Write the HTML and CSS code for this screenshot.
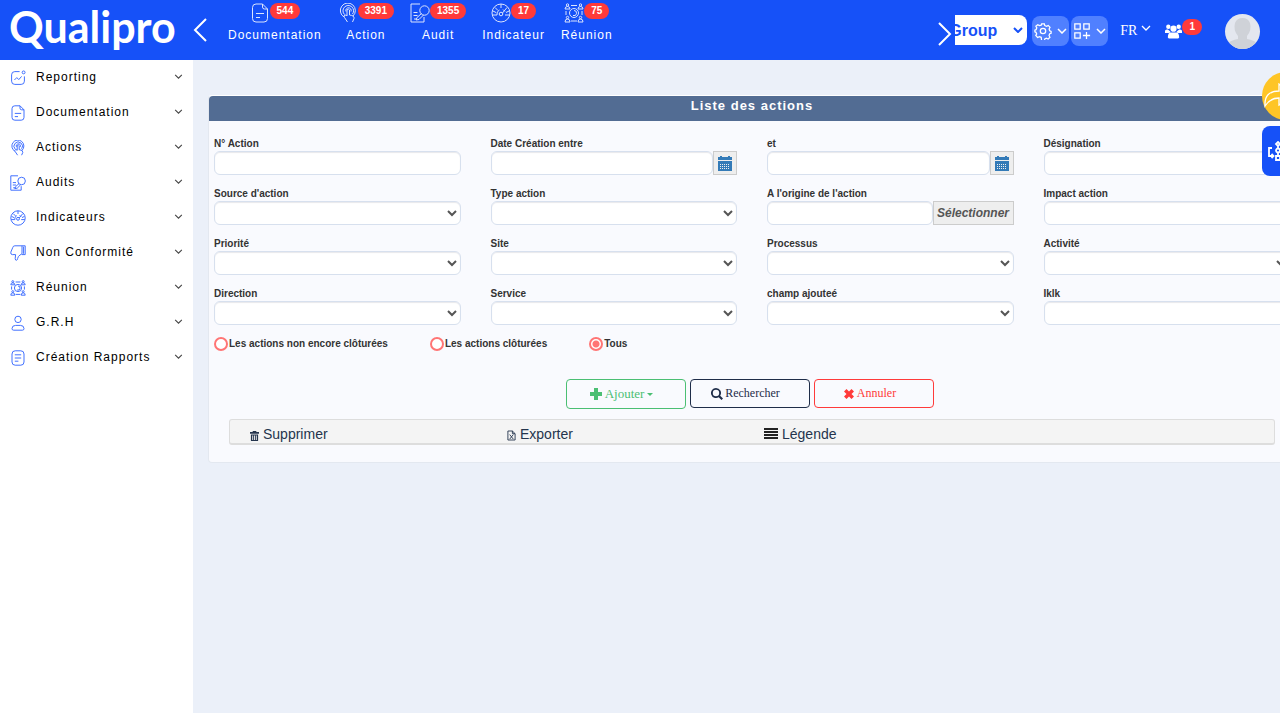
FILE: index.html
```html
<!DOCTYPE html>
<html lang="fr">
<head>
<meta charset="utf-8">
<title>Qualipro - Liste des actions</title>
<link rel="stylesheet" href="styles.css">
</head>
<body>
<svg class="sprite" aria-hidden="true">
  <symbol id="i-report" viewBox="0 0 20 20"><path d="M12 2H6Q2 2 2 6v8q0 4 4 4h8q4 0 4-4V8M5.500 12.500l3-3 2.500 2.500 3.500-4"/><circle cx="17" cy="3" r="1.800"/></symbol>
  <symbol id="i-doc" viewBox="0 0 20 20"><path d="M12.500 1H6Q2.500 1 2.500 4.500v11Q2.500 19 6 19h8q3.500 0 3.500-3.500V6zM12.500 1v3q0 2 2 2h3M6 10.500h8M6 14.500h4"/></symbol>
  <symbol id="i-touch" viewBox="0 0 20 20"><path d="M6 14A7.500 7.500 0 1 1 15 13M6.500 11.500a5.300 5.300 0 1 1 8-.5M8 8.500a2.700 2.700 0 1 1 5 0M9 13V7q1.300-2 2.500 0v5q5 .5 4.500 3.500L14.500 19M9 12.500 7 12q-2 .5-.5 2.500L9.500 19"/></symbol>
  <symbol id="i-audit" viewBox="0 0 20 20"><path d="M10 1H1v18h13v-5M3.500 9.500h4M3.500 12.500h4M4 16h3M11.500 10.500 7 14.500l-1 2.500 3-.5 4.500-4.500"/><circle cx="14.500" cy="7.500" r="4.700"/></symbol>
  <symbol id="i-gauge" viewBox="0 0 20 20"><circle cx="10" cy="10" r="9"/><path d="M1.500 12H6m8 0h4.500M4 4.500l3 3M10 1v4M16 4.500 11.500 10M6 12a4.500 4.500 0 0 1 2.500-5M12 6.500l2 2M2 8l3 1.500M18 8l-3 1.500"/><circle cx="10" cy="11" r="1.800"/></symbol>
  <symbol id="i-meet" viewBox="0 0 20 20"><circle cx="10" cy="10" r="4.500"/><path d="M10 7.500q3 0 2.500 3T9 12.500M7 2.500h6M7 18h6M2 8v4M18 8v4M1 6q0-2.500 2.500-2.500T6 6zM14 6q0-2.500 2.500-2.500T19 6zM1 19q0-3 2.500-3T6 19zM14 19q0-3 2.500-3T19 19z"/><circle cx="3.500" cy="2" r="1.200"/><circle cx="16.500" cy="2" r="1.200"/><circle cx="3.500" cy="14.500" r="1.200"/><circle cx="16.500" cy="14.500" r="1.200"/></symbol>
  <symbol id="i-down" viewBox="0 0 20 20"><path d="M15 1H6Q4 1 3.500 3L1 9q-.5 3 2 3h4l-.5 5q0 2.500 2 2 1-.5 1-2 .5-3 3-4.500L15 11zM15 1h4v11h-4M17 2v9"/></symbol>
  <symbol id="i-user" viewBox="0 0 20 20"><circle cx="10" cy="5.500" r="4"/><path d="M7 13h6q4.500 0 4.500 4 0 2-2 2h-11q-2 0-2-2 0-4 4.500-4z"/></symbol>
  <symbol id="i-list" viewBox="0 0 20 20"><rect x="2.500" y="1" width="15" height="18" rx="4"/><path d="M6 6h8M6 10h8M6 14h4.500"/></symbol>
  <symbol id="i-chev" viewBox="0 0 10 6"><path d="M1 1l4 4 4-4"/></symbol>
  <symbol id="i-cal" viewBox="0 0 16 16"><path class="solid" d="M1 2h2V1h2v1h6V1h2v1h2v3H1z"/><path class="solid" fill-rule="evenodd" d="M1 6h14v10H1zM3 9v1h1V9zm2 0v1h1V9zm2 0v1h1V9zm2 0v1h1V9zm2 0v1h1V9zM3 11v1h1v-1zm2 0v1h1v-1zm2 0v1h1v-1zm2 0v1h1v-1zm2 0v1h1v-1zM3 13v1h1v-1zm2 0v1h1v-1zm2 0v1h1v-1zm2 0v1h1v-1zm2 0v1h1v-1z"/></symbol>
</svg>

<header class="topbar">
  <a class="logo" href="#">Qualipro</a>
  <button class="slide" type="button" aria-label="Précédent"><svg viewBox="0 0 14 24"><path d="M13 1 2 12l11 11"/></svg></button>
  <nav class="modules">
    <a href="#"><span class="top"><svg class="ico"><use href="#i-doc"/></svg><b class="badge">544</b></span>Documentation</a>
    <a href="#"><span class="top"><svg class="ico"><use href="#i-touch"/></svg><b class="badge">3391</b></span>Action</a>
    <a href="#"><span class="top"><svg class="ico"><use href="#i-audit"/></svg><b class="badge">1355</b></span>Audit</a>
    <a href="#"><span class="top"><svg class="ico"><use href="#i-gauge"/></svg><b class="badge">17</b></span>Indicateur</a>
    <a href="#"><span class="top"><svg class="ico"><use href="#i-meet"/></svg><b class="badge">75</b></span>Réunion</a>
  </nav>
  <button class="slide next" type="button" aria-label="Suivant"><svg viewBox="0 0 14 24"><path d="M1 1l11 11L1 23"/></svg></button>
  <div class="group"><select aria-label="Groupe"><option>Group</option></select><svg class="chev"><use href="#i-chev"/></svg></div>
  <button class="tool" type="button" aria-label="Paramètres"><svg class="ico" viewBox="0 0 20 20"><path d="M8.500 2h3l.5 2 2 .8 1.800-1 2 2.200-1 1.800.7 2 1.500.7v2l-1.500.5-.8 2 1 2-2 2-2-1-1.700.8-.5 2.200h-3L8 17l-2-.8-2 1-2-2.200 1-1.800-.8-1.700L1 11V9l1.300-.5.8-2-1-1.800L4.200 3 6 4l2-.5z"/><circle cx="10" cy="10" r="3"/></svg><svg class="chev"><use href="#i-chev"/></svg></button>
  <button class="tool" type="button" aria-label="Applications"><svg class="ico" viewBox="0 0 20 20"><path d="M2 2h6v6H2zM12 2h6v6h-6zM2 12h6v6H2zM15 11v8M11 15h8"/></svg><svg class="chev"><use href="#i-chev"/></svg></button>
  <button class="lang" type="button">FR <svg class="chev"><use href="#i-chev"/></svg></button>
  <a class="people" href="#" aria-label="Utilisateurs connectés"><svg viewBox="0 0 18 16"><circle cx="3.500" cy="3.500" r="2.300"/><circle cx="14.500" cy="3.500" r="2.300"/><circle cx="9" cy="5.500" r="3.300"/><path d="M0 10V8q0-2 3-1.500l2 1.500 1 1-2 1zM18 10V8q0-2-3-1.500L13 8l-1 1 2 1zM3 15q0-5.500 3-5.500h6q3 0 3 5.500l-1 1H4z"/></svg><b class="badge">1</b></a>
  <a class="avatar" href="#" aria-label="Profil"><svg viewBox="0 0 35 35"><path d="M0 35v-4q6-5 13-6v-3Q8 16 10 9q2-5 7.500-5T25 9q2 7-3 13v3q7 1 13 6v4z"/></svg></a>
</header>

<div class="layout">
  <aside class="sidebar">
    <a href="#"><svg class="ico"><use href="#i-report"/></svg><span>Reporting</span><svg class="chev"><use href="#i-chev"/></svg></a>
    <a href="#"><svg class="ico"><use href="#i-doc"/></svg><span>Documentation</span><svg class="chev"><use href="#i-chev"/></svg></a>
    <a href="#"><svg class="ico"><use href="#i-touch"/></svg><span>Actions</span><svg class="chev"><use href="#i-chev"/></svg></a>
    <a href="#"><svg class="ico"><use href="#i-audit"/></svg><span>Audits</span><svg class="chev"><use href="#i-chev"/></svg></a>
    <a href="#"><svg class="ico"><use href="#i-gauge"/></svg><span>Indicateurs</span><svg class="chev"><use href="#i-chev"/></svg></a>
    <a href="#"><svg class="ico"><use href="#i-down"/></svg><span>Non Conformité</span><svg class="chev"><use href="#i-chev"/></svg></a>
    <a href="#"><svg class="ico"><use href="#i-meet"/></svg><span>Réunion</span><svg class="chev"><use href="#i-chev"/></svg></a>
    <a href="#"><svg class="ico"><use href="#i-user"/></svg><span>G.R.H</span><svg class="chev"><use href="#i-chev"/></svg></a>
    <a href="#"><svg class="ico"><use href="#i-list"/></svg><span>Création Rapports</span><svg class="chev"><use href="#i-chev"/></svg></a>
  </aside>

  <main class="main">
    <section class="card">
      <h1 class="title">Liste des actions</h1>
      <form class="form">
        <div class="fields">
          <div class="field"><label for="num">N° Action</label><input id="num" type="text"></div>
          <div class="field"><label for="d1">Date Création entre</label><div class="combo"><input id="d1" type="text"><button class="addon" type="button" aria-label="Calendrier"><svg><use href="#i-cal"/></svg></button></div></div>
          <div class="field"><label for="d2">et</label><div class="combo"><input id="d2" type="text"><button class="addon" type="button" aria-label="Calendrier"><svg><use href="#i-cal"/></svg></button></div></div>
          <div class="field"><label for="des">Désignation</label><input id="des" type="text"></div>

          <div class="field"><label for="src">Source d'action</label><select id="src"><option></option></select></div>
          <div class="field"><label for="typ">Type action</label><select id="typ"><option></option></select></div>
          <div class="field"><label for="ori">A l'origine de l'action</label><div class="combo"><input id="ori" type="text"><button class="addon pick" type="button">Sélectionner</button></div></div>
          <div class="field"><label for="imp">Impact action</label><input id="imp" type="text"></div>

          <div class="field"><label for="pri">Priorité</label><select id="pri"><option></option></select></div>
          <div class="field"><label for="sit">Site</label><select id="sit"><option></option></select></div>
          <div class="field"><label for="pro">Processus</label><select id="pro"><option></option></select></div>
          <div class="field"><label for="act">Activité</label><select id="act"><option></option></select></div>

          <div class="field"><label for="dir">Direction</label><select id="dir"><option></option></select></div>
          <div class="field"><label for="ser">Service</label><select id="ser"><option></option></select></div>
          <div class="field"><label for="cha">champ ajouteé</label><select id="cha"><option></option></select></div>
          <div class="field"><label for="ikl">Iklk</label><input id="ikl" type="text"></div>
        </div>

        <div class="radios">
          <label><input type="radio" name="etat">Les actions non encore clôturées</label>
          <label><input type="radio" name="etat">Les actions clôturées</label>
          <label><input type="radio" name="etat" checked>Tous</label>
        </div>

        <div class="actions">
          <button class="btn add" type="button"><svg viewBox="0 0 12 12"><path d="M4 0h4v4h4v4H8v4H4V8H0V4h4z"/></svg>Ajouter<i class="caret"></i></button>
          <button class="btn search" type="button"><svg viewBox="0 0 12 12"><path fill-rule="evenodd" d="M5 0a5 5 0 0 1 4.200 7.700L12 10.500 10.500 12 7.700 9.200A5 5 0 1 1 5 0zm0 1.800a3.200 3.200 0 1 0 0 6.400 3.200 3.200 0 0 0 0-6.400z"/></svg>Rechercher</button>
          <button class="btn cancel" type="button"><svg viewBox="0 0 12 12"><path d="M3.500 1 6 3.500 8.500 1 11 3.500 8.500 6 11 8.500 8.500 11 6 8.500 3.500 11 1 8.500 3.500 6 1 3.500z"/></svg>Annuler</button>
        </div>
      </form>

      <div class="toolbar">
        <a href="#"><svg class="small" viewBox="0 0 10 12"><path fill-rule="evenodd" d="M3 1h4v1h3v2H0V2h3zM1 5h8v7H1zm1.500 1v5h1V6zm2 0v5h1V6zm2 0v5h1V6z"/></svg>Supprimer</a>
        <a href="#"><svg class="small line" viewBox="0 0 10 12"><path d="M6 1H1v10h8V4zM6 1v3h3M3 5l4 5M7 5l-4 5"/></svg>Exporter</a>
        <a href="#"><svg class="bars" viewBox="0 0 14 12"><path d="M0 0h14v2H0zM0 3h14v2H0zM0 6h14v2H0zM0 9h14v2H0z"/></svg>Légende</a>
      </div>
    </section>
  </main>
</div>

<button class="float share" type="button" aria-label="Partager"><svg viewBox="0 0 34 26"><path d="M1 23Q0 8 15 8V1l16 11-16 10v-7Q6 15 1 23z"/></svg></button>
<button class="float flow" type="button" aria-label="Processus"><svg viewBox="0 0 20 20"><path d="M4 7H1v8h4M3.500 13l2 2-2 2M10 1l2 2-2 2-2-2zM10 5v2M10 11v3M8 15h4v4H8zM16 7h3v8h-4"/><circle cx="10" cy="9.500" r="2"/></svg></button>
</body>
</html>
```
FILE: styles.css
```css
* { box-sizing: border-box; }

body {
  margin: 0;
  min-height: 100vh;
  display: flex;
  flex-direction: column;
  position: relative;
  overflow: hidden;
  background: #ebf0f9;
  color: #333;
  font-family: "Liberation Sans", Arial, sans-serif;
  font-size: 12px;
}

a { color: inherit; text-decoration: none; }
button { margin: 0; padding: 0; border: 0; background: none; color: inherit; font: inherit; }
svg { fill: none; stroke: currentColor; flex: none; }
.sprite { position: absolute; width: 0; height: 0; }
.solid { fill: currentColor; stroke: none; }
.chev { width: 10px; height: 6px; }

/* Top bar */
.topbar {
  display: flex;
  align-items: flex-start;
  height: 60px;
  padding: 0 20px 0 9px;
  background: #1651f8;
  color: #fff;
}
.logo {
  width: 184px;
  font: 700 43px/54px Lato, sans-serif;
}
.slide { margin-top: 18px; }
.slide svg { display: block; width: 14px; height: 24px; stroke-width: 2; }
.next { margin: 22px 3px 0 auto; }

.modules {
  display: flex;
  gap: 16px;
  padding-left: 21px;
  letter-spacing: 1px;
}
.modules a {
  display: flex;
  flex-direction: column;
  align-items: center;
  padding-top: 2px;
  line-height: 20px;
}
.top { display: flex; align-items: flex-start; padding-top: 1px; height: 23px; }
.top .ico { width: 20px; height: 20px; opacity: 0.85; }
.badge {
  height: 16px;
  padding: 0 7px;
  border-radius: 8px;
  background: #ff3a3a;
  color: #fff;
  font-size: 10px;
  line-height: 16px;
  letter-spacing: 0;
}

.group {
  display: flex;
  align-items: center;
  position: relative;
  width: 72px;
  height: 30px;
  margin: 15px 5px 0 0;
  color: #1651f8;
}
.group select {
  appearance: none;
  width: 100%;
  height: 30px;
  padding: 0;
  border: 0;
  border-radius: 0 8px 8px 0;
  background: #fff;
  color: inherit;
  font: bold 16px "Liberation Sans", Arial, sans-serif;
  text-indent: -6px;
}
.group .chev { position: absolute; right: 4px; stroke-width: 2; }

.tool {
  display: flex;
  align-items: center;
  justify-content: space-between;
  width: 37px;
  height: 30px;
  margin: 16px 2px 0 0;
  padding: 0 2px;
  border-radius: 8px;
  background: #5080ff;
}
.tool .ico { width: 18px; height: 18px; stroke-width: 1.400; }
.tool .chev { stroke-width: 1.500; }
.lang {
  display: flex;
  gap: 4px;
  margin: 23px 14px 0 10px;
  font: 14px/16px "Liberation Serif", serif;
}
.lang .chev { margin-top: 2px; stroke-width: 1.300; }
.people { display: flex; align-items: flex-start; margin: 19px 23px 0 0; }
.people svg { width: 17px; height: 16px; margin-top: 4px; fill: #fff; stroke: none; }
.avatar {
  width: 35px;
  height: 35px;
  margin-top: 14px;
  border-radius: 50%;
  overflow: hidden;
  background: #e4e7ef;
}
.avatar svg { display: block; fill: #cfd2d8; stroke: none; }

/* Page frame */
.layout { display: flex; flex: 1; }
.sidebar { width: 193px; background: #fff; color: #000; letter-spacing: 1px; }
.sidebar a {
  display: flex;
  align-items: center;
  gap: 10px;
  height: 35px;
  padding: 0 10px 2px;
}
.sidebar span { flex: 1; line-height: 20px; }
.sidebar .ico { width: 16px; height: 16px; margin-top: 2px; color: #3a6bff; stroke-width: 1.200; }
.sidebar .chev { width: 9px; height: 5px; color: #444; stroke-width: 1.300; }

.main { flex: 1; min-width: 0; padding: 35px 0 0 15px; }

/* The card runs past the right edge of the window */
.card {
  margin-right: -16px;
  padding-bottom: 17px;
  border: 1px solid #e3e8f0;
  border-top-color: #fff;
  border-radius: 4px;
  background: #f9fafe;
}
.title {
  margin: 0;
  height: 25px;
  border-radius: 4px 4px 0 0;
  background: #526c93;
  color: #fff;
  font-size: 13px;
  line-height: 19px;
  letter-spacing: 1px;
  text-align: center;
}

.form { padding: 16px 5px 0; }
.fields {
  display: grid;
  grid-template-columns: repeat(4, minmax(0, 1fr));
  gap: 12px 30px;
}
.field label { display: block; height: 14px; line-height: 13px; }
.field label, .radios { font-size: 10px; font-weight: bold; }
.field input, .field select {
  display: block;
  width: 100%;
  height: 24px;
  border: 1px solid #d7e0ee;
  border-radius: 6px;
  background: #fff;
  box-shadow: inset 0 1px 1px #e8e8ec;
  color: #555;
  font-size: 12px;
}
.combo { display: flex; }
.combo input { flex: 1; width: auto; min-width: 0; }
.addon {
  display: flex;
  align-items: center;
  justify-content: center;
  width: 24px;
  height: 24px;
  border: 1px solid #ccc;
  background: #eee;
  color: #337ab7;
}
.addon svg { width: 16px; height: 16px; }
.pick { width: 81px; color: #555; font-size: 12px; font-style: italic; font-weight: bold; }

.radios { display: flex; gap: 42px; padding-top: 12px; line-height: 14px; }
.radios label { display: flex; align-items: center; gap: 1px; }
.radios input {
  appearance: none;
  width: 14px;
  height: 14px;
  margin: 0;
  border: 2px solid #ff7575;
  border-radius: 50%;
  background: #fff;
}
.radios input:checked { background: radial-gradient(circle, #ff7575 3px, #fff 4px); }

.actions {
  display: flex;
  justify-content: center;
  gap: 4px;
  padding: 28px 4px 10px 0;
}
.btn {
  display: flex;
  align-items: center;
  justify-content: center;
  gap: 2px;
  width: 120px;
  height: 29px;
  padding-right: 9px;
  border: 1px solid;
  border-radius: 4px;
  background: transparent;
  font: 12px "Liberation Serif", serif;
}
.btn svg { width: 12px; height: 12px; fill: currentColor; stroke: none; }
.add { gap: 3px; height: 30px; color: #4bbf73; font-size: 13px; }
.search { color: #1f2d49; }
.cancel { color: #ff3a3a; }
.caret { border: 3px solid transparent; border-top-color: currentColor; border-bottom: 0; }

.toolbar {
  display: grid;
  grid-template-columns: repeat(4, 1fr);
  column-gap: 4px;
  height: 26px;
  margin: 0 20px;
  padding-left: 20px;
  border: 1px solid #ddd;
  border-bottom-width: 2px;
  border-radius: 3px;
  background: #f4f4f4;
  color: #24344d;
  font-size: 14px;
  line-height: 29px;
}
.toolbar a { display: flex; align-items: center; gap: 4px; height: 28px; }
.toolbar svg { fill: currentColor; stroke: none; }
.toolbar .small { width: 9px; height: 11px; margin-top: 2px; }
.toolbar .line { fill: none; stroke: currentColor; }
.toolbar .bars { width: 14px; height: 12px; color: #222; }

/* Side shortcuts, half outside the window */
.float { position: absolute; color: #fff; }
.share { top: 72px; right: -30px; width: 48px; height: 48px; border-radius: 50%; background: #fec526; }
.share svg { display: block; width: 34px; height: 26px; margin-left: 2px; stroke-width: 1.300; }
.flow { top: 126px; right: -32px; width: 50px; height: 50px; border-radius: 8px; background: #1651f8; }
.flow svg { display: block; width: 20px; height: 20px; margin-left: 6px; stroke-width: 1.800; }
```
